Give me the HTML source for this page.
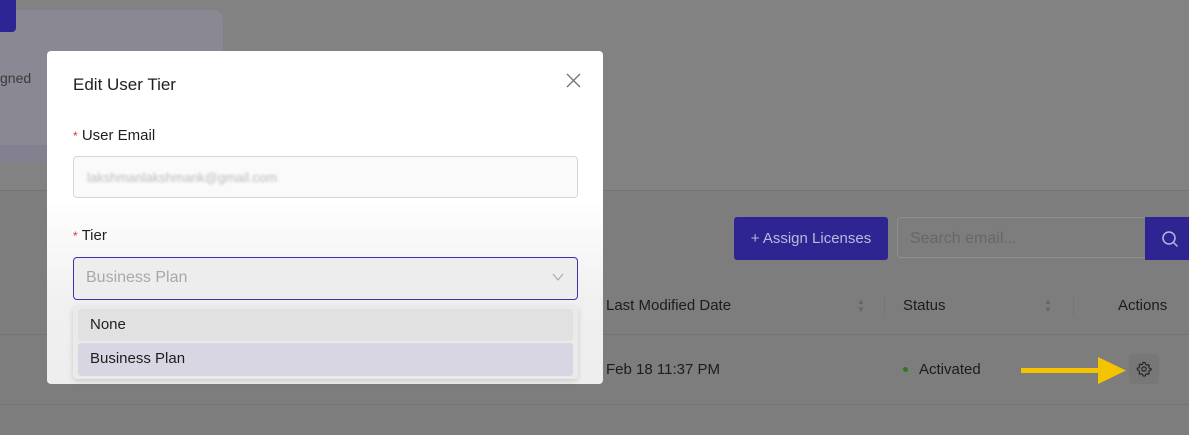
<!DOCTYPE html>
<html><head><style>
body{margin:0;width:1189px;height:435px;overflow:hidden;background:#7d7d7d;font-family:"Liberation Sans",sans-serif;position:relative}
.a{position:absolute}
</style></head><body>
<div class="a" style="left:0;top:0;width:1189px;height:190px;background:#828282"></div>
<div class="a" style="left:0;top:10px;width:223px;height:153px;background:#8a8893;border-radius:10px"></div>
<div class="a" style="left:0;top:145px;width:223px;height:18px;background:#83808f"></div>
<div class="a" style="left:0;top:0;width:16px;height:32px;background:#2e2594;border-radius:0 0 4px 0"></div>
<div class="a" style="left:0;top:70px;font-size:14px;color:#3a3a3a">gned</div>
<div class="a" style="left:0;top:190px;width:1189px;height:1px;background:#747474"></div>
<div class="a" style="left:0;top:334px;width:1189px;height:1px;background:#747474"></div>
<div class="a" style="left:0;top:404px;width:1189px;height:1px;background:#747474"></div>
<div class="a" style="left:734px;top:217px;width:154px;height:43px;background:#2e2592;border-radius:3px;color:#bcbbd8;font-size:15px;line-height:43px;text-align:center">+ Assign Licenses</div>
<div class="a" style="left:897px;top:217px;width:250px;height:41px;border:1px solid #8f8f8f;border-radius:3px 0 0 3px;color:#676767;font-size:16px;line-height:41px;padding-left:12px;box-sizing:border-box;width:250px">Search email...</div>
<div class="a" style="left:1145px;top:217px;width:44px;height:43px;background:#2e2592"></div>
<svg class="a" style="left:1161px;top:230px" width="18" height="18"><circle cx="8" cy="8" r="6" fill="none" stroke="#b8b8d8" stroke-width="1.5"/><path d="M12.5 12.5l4 4" stroke="#b8b8d8" stroke-width="1.5"/></svg>
<div class="a" style="left:606px;top:297px;font-size:15px;color:#1c1c1c">Last Modified Date</div>
<div class="a" style="left:903px;top:297px;font-size:15px;color:#1c1c1c">Status</div>
<div class="a" style="left:1118px;top:297px;font-size:15px;color:#1c1c1c">Actions</div>
<div class="a" style="left:857px;top:298px;font-size:8px;color:#666;line-height:8px">▲<br>▼</div>
<div class="a" style="left:1044px;top:298px;font-size:8px;color:#666;line-height:8px">▲<br>▼</div>
<div class="a" style="left:884px;top:295px;width:1px;height:22px;background:#767676"></div>
<div class="a" style="left:1073px;top:295px;width:1px;height:22px;background:#767676"></div>
<div class="a" style="left:606px;top:361px;font-size:15px;color:#1c1c1c">Feb 18 11:37 PM</div>
<div class="a" style="left:903px;top:367px;width:5px;height:5px;border-radius:50%;background:#2c7a1c"></div>
<div class="a" style="left:919px;top:361px;font-size:15px;color:#1c1c1c">Activated</div>
<div class="a" style="left:1021px;top:368px;width:80px;height:5px;background:#f5c400"></div>
<svg class="a" style="left:1098px;top:357px" width="30" height="27"><path d="M0 0L28 13.5L0 27Z" fill="#f5c400"/></svg>
<div class="a" style="left:1129px;top:354px;width:30px;height:30px;background:#777;border-radius:4px"></div>
<svg class="a" style="left:1136px;top:361px" width="16" height="16" viewBox="0 0 16 16"><path d="M8 1.5l1.3.3.3 1.6 1.2.7 1.5-.6 1 1.1-.6 1.5.7 1.2 1.6.3v1.6l-1.6.3-.7 1.2.6 1.5-1 1.1-1.5-.6-1.2.7-.3 1.6H7l-.3-1.6-1.2-.7-1.5.6-1-1.1.6-1.5-.7-1.2L1.3 8.8V7.2l1.6-.3.7-1.2-.6-1.5 1-1.1 1.5.6 1.2-.7.3-1.6z" fill="none" stroke="#222" stroke-width="1.1"/><circle cx="8" cy="8" r="2.2" fill="none" stroke="#222" stroke-width="1.1"/></svg>

<div class="a" style="left:47px;top:51px;width:556px;height:333px;background:linear-gradient(#fff 0,#fff 45%,#f0f0f0 75%,#eeeeee 100%);border-radius:4px"></div>
<div class="a" style="left:73px;top:75px;font-size:17px;color:#1f1f1f">Edit User Tier</div>
<svg class="a" style="left:566px;top:73px" width="15" height="15"><path d="M1 1L14 14M14 1L1 14" stroke="#777" stroke-width="1.4"/></svg>
<div class="a" style="left:73px;top:127px;font-size:15px;color:#1f1f1f"><span style="color:#d33;font-size:12px">*</span> User Email</div>
<div class="a" style="left:73px;top:156px;width:505px;height:42px;border:1px solid #d6d6d6;border-radius:4px;box-sizing:border-box;background:#fafafa"></div>
<div class="a" style="left:87px;top:170px;font-size:13px;color:#bbb;filter:blur(1.3px)">lakshmanlakshmank@gmail.com</div>
<div class="a" style="left:73px;top:227px;font-size:15px;color:#1f1f1f"><span style="color:#d33;font-size:12px">*</span> Tier</div>
<div class="a" style="left:73px;top:257px;width:505px;height:43px;border:1.5px solid #3d33a8;border-radius:4px;box-sizing:border-box;background:#ededed"></div>
<div class="a" style="left:86px;top:269px;font-size:16px;color:#a8a8a8">Business Plan</div>
<svg class="a" style="left:552px;top:273px" width="12" height="9"><path d="M1 1L6 7L11 1" fill="none" stroke="#aaa" stroke-width="1.2"/></svg>
<div class="a" style="left:73px;top:306px;width:505px;height:73px;background:#eaeaea;border-radius:4px;box-shadow:0 2px 6px rgba(0,0,0,.15)"></div>
<div class="a" style="left:78px;top:309px;width:495px;height:32px;background:#e1e1e1;border-radius:3px"></div>
<div class="a" style="left:78px;top:343px;width:495px;height:33px;background:#d7d6e2;border-radius:3px"></div>
<div class="a" style="left:90px;top:316px;font-size:15px;color:#1f1f1f">None</div>
<div class="a" style="left:90px;top:350px;font-size:15px;color:#1f1f1f">Business Plan</div>
</body></html>
